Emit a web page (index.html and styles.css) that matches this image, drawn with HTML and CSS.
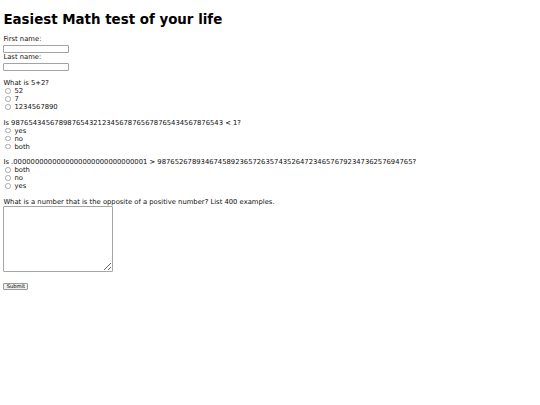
FILE: index.html
```html
<!DOCTYPE html>
<html>
<head>
<meta charset="utf-8">
<link rel="stylesheet" href="styles.css">
</head>
<body class="page">
<h1 class="title">Easiest Math test of your life</h1>
<form class="quiz">
<div class="line">First name:</div>
<div class="field-row"><input class="field" type="text"></div>
<div class="line">Last name:</div>
<div class="field-row"><input class="field" type="text"></div>
<div class="gap"></div>
<div class="line">What is 5+2?</div>
<label class="opt"><input class="radio" type="radio" name="q1"> 52</label>
<label class="opt"><input class="radio" type="radio" name="q1"> 7</label>
<label class="opt"><input class="radio" type="radio" name="q1"> 1234567890</label>
<div class="gap"></div>
<div class="line">Is 9876543456789876543212345678765678765434567876543 &lt; 1?</div>
<label class="opt"><input class="radio" type="radio" name="q2"> yes</label>
<label class="opt"><input class="radio" type="radio" name="q2"> no</label>
<label class="opt"><input class="radio" type="radio" name="q2"> both</label>
<div class="gap"></div>
<div class="line">Is .0000000000000000000000000000001 &gt; 98765267893467458923657263574352647234657679234736257694765?</div>
<label class="opt"><input class="radio" type="radio" name="q3"> both</label>
<label class="opt"><input class="radio" type="radio" name="q3"> no</label>
<label class="opt"><input class="radio" type="radio" name="q3"> yes</label>
<div class="gap"></div>
<div class="line">What is a number that is the opposite of a positive number? List 400 examples.</div>
<div class="area-row"><textarea class="area"></textarea></div>
<div class="gap"></div>
<div class="submit-row"><button class="submit" type="submit">Submit</button></div>
</form>
</body>
</html>
```
FILE: styles.css
```css
.page {
  margin: 3.4px;
  font-family: "DejaVu Sans", sans-serif;
  font-size: 6.8px;
  color: #111;
  background: #fff;
}
.title {
  font-size: 13.4px;
  font-weight: bold;
  color: #000;
  margin: 9px 0 8.4px;
  line-height: 15.6px;
}
.quiz {
  display: flex;
  flex-direction: column;
  align-items: flex-start;
}
.line {
  line-height: 7.8px;
  height: 7.8px;
  white-space: nowrap;
}
.gap {
  height: 7.8px;
}
.field-row {
  height: 10.2px;
  display: flex;
  align-items: flex-start;
}
.field {
  box-sizing: border-box;
  width: 66px;
  height: 8px;
  margin: 0.4px 0 0;
  padding: 0;
  border: 1px solid #a3a3a3;
  border-radius: 1px;
  background: #fff;
}
.opt {
  display: flex;
  align-items: center;
  height: 8px;
  line-height: 8px;
  gap: 2.2px;
  margin-top: -1px;
  margin-bottom: 1px;
}
.radio {
  appearance: none;
  -webkit-appearance: none;
  box-sizing: border-box;
  width: 5.6px;
  height: 5.6px;
  margin: 0 1.2px 0 2.1px;
  border: 0.8px solid #a8a8a8;
  border-radius: 50%;
  background: #fff;
}
.area-row {
  height: 67.8px;
  display: flex;
  align-items: flex-start;
}
.area {
  box-sizing: border-box;
  width: 110px;
  height: 66px;
  margin: -1px 0 0;
  padding: 0;
  border: 1px solid #a6a6a6;
  border-radius: 1px;
  resize: both;
}
.submit-row {
  display: flex;
  padding-top: 0.2px;
}
.submit {
  box-sizing: border-box;
  height: 7.4px;
  width: 25px;
  margin: 0;
  padding: 0;
  font-family: "DejaVu Sans", sans-serif;
  font-size: 5.2px;
  line-height: 5.4px;
  border: 0.8px solid #9a9a9a;
  border-radius: 1px;
  background: #efefef;
  color: #000;
}
```
